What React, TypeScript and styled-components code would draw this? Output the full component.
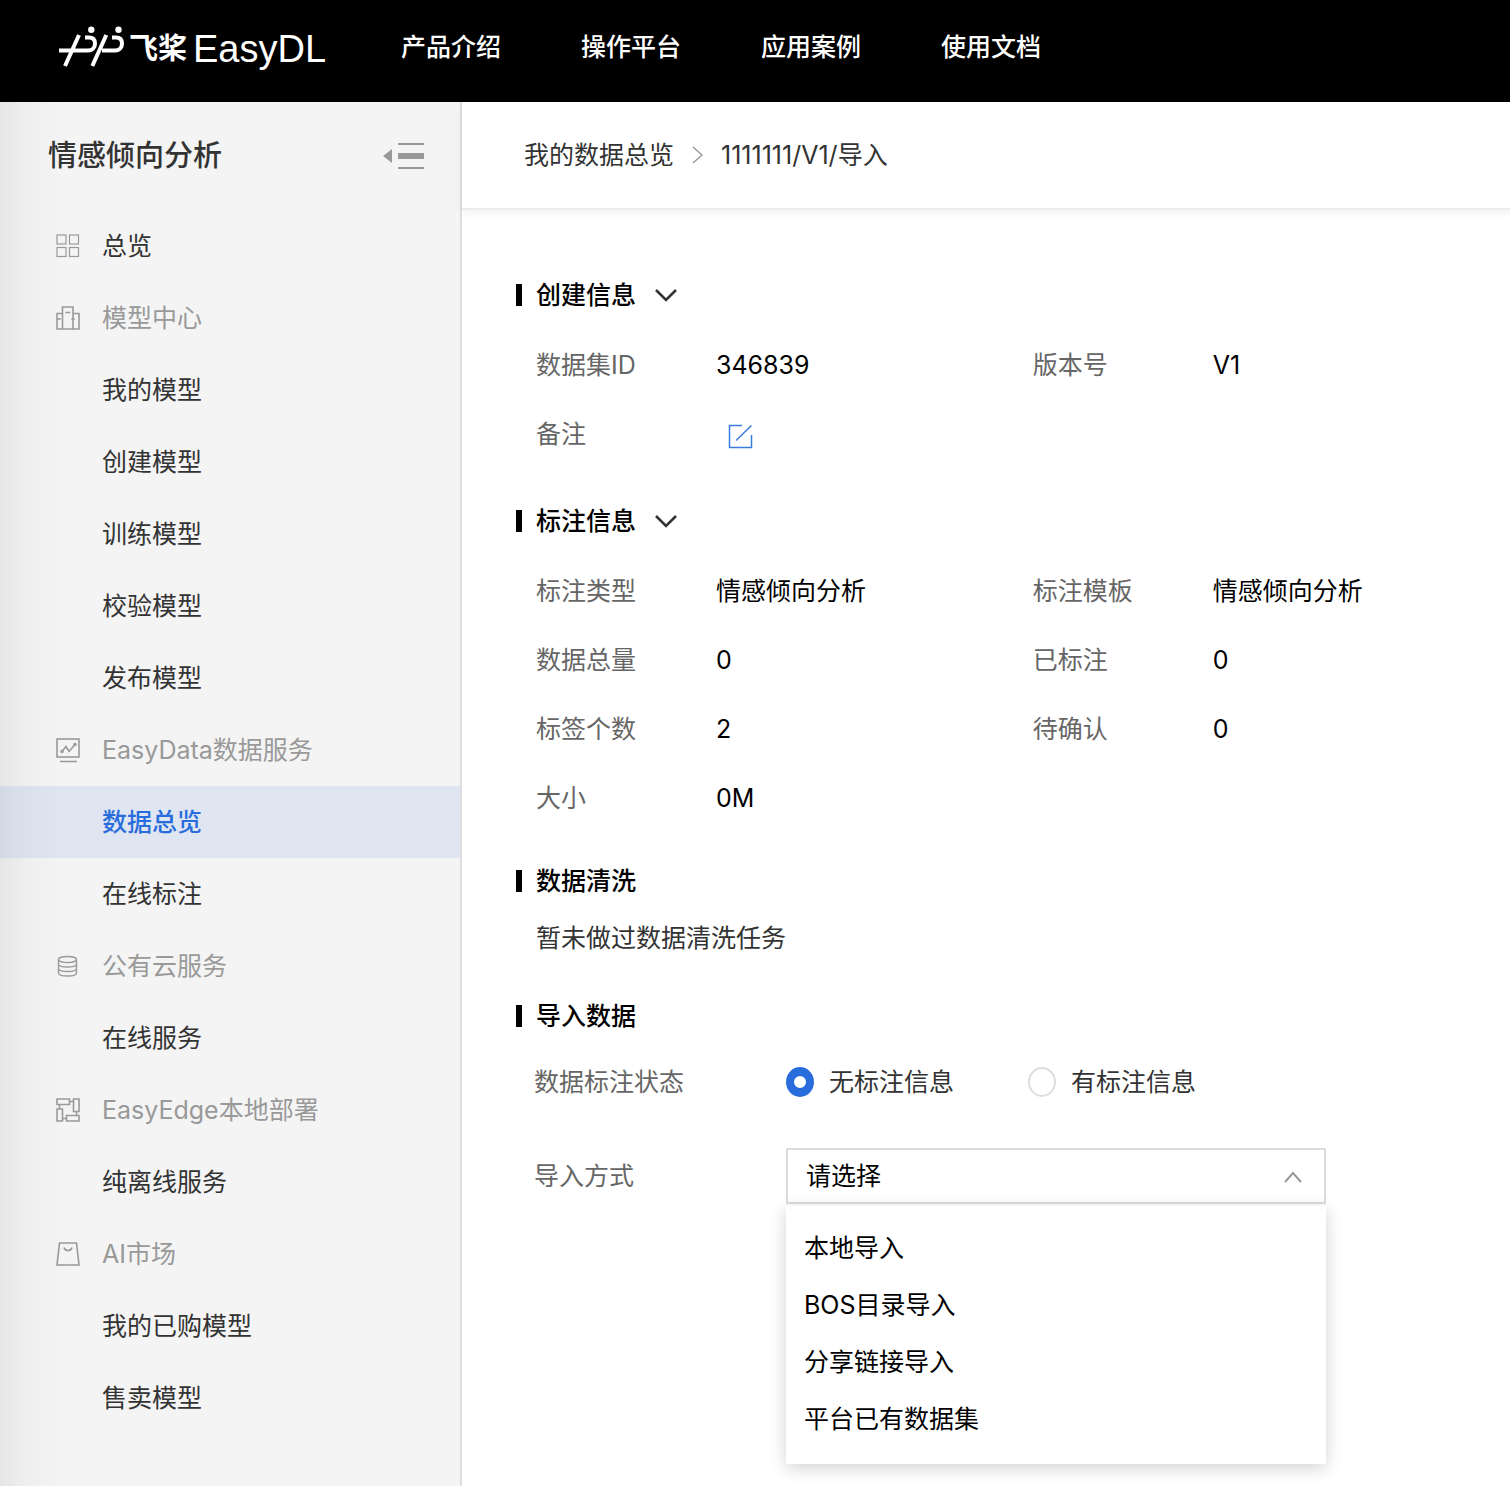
import React, { useState } from "react";
import styled, { createGlobalStyle } from "styled-components";

const GlobalStyle = createGlobalStyle`
  *, *::before, *::after { box-sizing: border-box; }
  body {
    margin: 0;
    background: #fff;
    color: #333;
    font-family: Inter, "Noto Sans CJK SC", sans-serif;
    font-size: 25px;
    font-weight: 400;
    line-height: 36px;
  }
  h1, h2, ul, dl, dd, p { margin: 0; padding: 0; }
  ul { list-style: none; }
  a { color: inherit; text-decoration: none; }
  button, select, input { font: inherit; color: inherit; margin: 0; }
`;

const Page = styled.div`
  display: flex;
  flex-direction: column;
  min-height: 100vh;
`;

const Header = styled.header`
  display: flex;
  align-items: center;
  height: 102px;
  padding: 0 58px 8px;
  background: #000;
  color: #fff;
`;

const Brand = styled.a`
  display: flex;
  align-items: center;
  width: 343px;
  flex: none;
  white-space: nowrap;
`;

const BrandMark = styled.svg`
  width: 68px;
  height: 42px;
  flex: none;
`;

const BrandName = styled.span`
  display: flex;
  align-items: center;
  gap: 6px;
  margin-left: 3px;
  padding-top: 4px;
`;

const BrandChinese = styled.span`
  font-size: 29px;
  font-weight: 700;
`;

const BrandLatin = styled.span`
  font-family: "Liberation Sans", sans-serif;
  font-size: 38px;
`;

const TopNav = styled.nav`
  display: flex;
  gap: 80px;
  font-weight: 500;
  white-space: nowrap;
`;

const Body = styled.div`
  display: flex;
  flex: 1;
`;

const Sidebar = styled.aside`
  width: 462px;
  flex: none;
  border-right: 2px solid #dedede;
  background: linear-gradient(to right, #e6e6e6, #efefef 28px, #f4f4f4 64px);
`;

const SidebarHead = styled.div`
  display: flex;
  align-items: center;
  justify-content: space-between;
  height: 108px;
  padding: 0 36px 0 48px;
`;

const SidebarTitle = styled.h1`
  font-size: 29px;
  font-weight: 500;
`;

const IconButton = styled.button`
  display: flex;
  padding: 0;
  border: 0;
  background: none;
  cursor: pointer;
`;

const MenuGroup = styled.div`
  display: flex;
  align-items: center;
  height: 72px;
  padding-left: 54px;
  color: #999;
`;

const MenuIcon = styled.svg`
  width: 28px;
  height: 28px;
  margin-right: 20px;
  fill: none;
  stroke: #999;
  stroke-width: 2;
`;

const MenuLink = styled.a<{ $active?: boolean; $icon?: boolean }>`
  display: flex;
  align-items: center;
  height: 72px;
  padding-left: ${(p) => (p.$icon ? 54 : 102)}px;
  color: ${(p) => (p.$active ? "#296ddd" : "#333")};
  font-weight: ${(p) => (p.$active ? 500 : 400)};
  background: ${(p) => (p.$active ? "rgba(41, 109, 218, 0.1)" : "none")};
`;

const Main = styled.main`
  flex: 1;
  min-width: 0;
`;

const Breadcrumb = styled.nav`
  display: flex;
  align-items: center;
  height: 108px;
  padding-left: 62px;
  border-bottom: 2px solid #ebebeb;
  box-shadow: 0 4px 8px rgba(0, 0, 0, 0.05);
`;

const Separator = styled.svg`
  width: 11px;
  height: 18px;
  margin: 0 18px;
`;

const Content = styled.div`
  padding: 49px 0 0 54px;
`;

const Section = styled.section<{ $gap: number }>`
  margin-bottom: ${(p) => p.$gap}px;
`;

const SectionHead = styled.div`
  display: flex;
  align-items: center;
  height: 71px;
  &::before {
    content: "";
    width: 6px;
    height: 22px;
    margin-right: 14px;
    background: #000;
  }
`;

const SectionTitle = styled.h2`
  margin-right: 19px;
  color: #000;
  font-size: 25px;
  font-weight: 500;
`;

const Facts = styled.dl`
  display: grid;
  grid-template-columns: 51fr 49fr;
  padding-left: 20px;
`;

const Fact = styled.div`
  display: flex;
  align-items: center;
  height: 69px;
`;

const FactName = styled.dt`
  width: 180px;
  flex: none;
  color: #666;
`;

const FactValue = styled.dd`
  display: flex;
  color: #000;
`;

const EditButton = styled(IconButton)`
  margin: 6px 0 0 12px;
`;

const Note = styled.p`
  height: 45px;
  padding-left: 20px;
  line-height: 45px;
`;

const FormRow = styled.div`
  display: flex;
  align-items: center;
  height: 62px;
  margin-bottom: 32px;
  padding-left: 18px;
`;

const FormLabel = styled.label`
  width: 252px;
  flex: none;
  color: #666;
`;

const RadioGroup = styled.div`
  display: flex;
  gap: 74px;
`;

const RadioLabel = styled.label`
  display: flex;
  align-items: center;
  gap: 15px;
`;

const Radio = styled.input`
  appearance: none;
  width: 28px;
  height: 30px;
  border: 2px solid #ddd;
  border-radius: 50%;
  background: #fff;
  &:checked {
    border-color: #296ddd;
    border-width: 9px 8px;
  }
`;

const Picker = styled.div`
  position: relative;
  width: 540px;
`;

const Select = styled.select`
  display: block;
  appearance: none;
  width: 100%;
  height: 56px;
  padding: 0 18px;
  border: 2px solid #dcdcdc;
  border-radius: 0;
  background: #fff;
  color: #000;
  outline: none;
`;

const Caret = styled.svg`
  position: absolute;
  right: 24px;
  top: 22px;
  width: 18px;
  height: 14px;
  pointer-events: none;
`;

const Options = styled.ul`
  position: absolute;
  top: 58px;
  left: 0;
  right: 0;
  padding: 14px 0 16px;
  background: #fff;
  box-shadow: 0 4px 16px rgba(0, 0, 0, 0.18);
`;

const Option = styled.button`
  display: block;
  width: 100%;
  padding: 0 18px;
  border: 0;
  background: none;
  color: #000;
  line-height: 57px;
  text-align: left;
  cursor: pointer;
`;

const icons: Record<string, React.ReactNode> = {
  grid: (
    <g strokeWidth="1.2">
      <rect x="3" y="3" width="9" height="9" />
      <rect x="15.5" y="3" width="9" height="9" />
      <rect x="3" y="15.5" width="9" height="9" />
      <rect x="15.5" y="15.5" width="9" height="9" />
    </g>
  ),
  building: (
    <g strokeWidth="1.6">
      <path d="M8.5 25V3h10.500v22M8.500 9.500H3V25h22V9.500h-6" />
      <path d="M13 8.500h5M5 15h3.500M19 15h3.500" transform="translate(-1.700 0)" />
    </g>
  ),
  monitor: (
    <g strokeWidth="1.6">
      <rect x="3" y="3" width="22" height="18" />
      <path d="M6 25.5h17M8 15.500l4-5 3 5 6-7" />
      <circle cx="8" cy="15.5" r="1" />
      <circle cx="21" cy="8.5" r="1" />
    </g>
  ),
  database: (
    <g strokeWidth="1.4">
      <ellipse cx="13.5" cy="7.5" rx="9" ry="3" />
      <path d="M4.500 7.500v13.500c0 4 18 4 18 0V7.500M4.500 12c0 4 18 4 18 0M4.500 16.500c0 4 18 4 18 0" />
    </g>
  ),
  edge: (
    <g strokeWidth="1.6">
      <path d="M3 3h12.500v5.500H3zM19.500 3H25v12.500h-5.500zM3 13h5.500v12H3zM12.500 19.500H25V25H12.500z" />
      <path d="M15.500 5.500h4M22.500 15.500v4M5.500 8.500V13M8.500 22.500h4" />
    </g>
  ),
  bag: (
    <g strokeWidth="1.6">
      <path d="M5.500 3h17L25 25H3z" />
      <path d="M10 7.500c1 4 7 4 8 0" />
    </g>
  ),
};

const menu: { icon?: string; label: string; group?: boolean }[] = [
  { icon: "grid", label: "总览" },
  { icon: "building", label: "模型中心", group: true },
  { label: "我的模型" },
  { label: "创建模型" },
  { label: "训练模型" },
  { label: "校验模型" },
  { label: "发布模型" },
  { icon: "monitor", label: "EasyData数据服务", group: true },
  { label: "数据总览" },
  { label: "在线标注" },
  { icon: "database", label: "公有云服务", group: true },
  { label: "在线服务" },
  { icon: "edge", label: "EasyEdge本地部署", group: true },
  { label: "纯离线服务" },
  { icon: "bag", label: "AI市场", group: true },
  { label: "我的已购模型" },
  { label: "售卖模型" },
];

const importMethods = ["本地导入", "BOS目录导入", "分享链接导入", "平台已有数据集"];

const Toggle = () => (
  <IconButton type="button" aria-label="收起">
    <svg width="22" height="14" viewBox="0 0 22 14" fill="none" stroke="#333" strokeWidth="2.6">
      <path d="M1 2l10 10 10-10" />
    </svg>
  </IconButton>
);

export default function App() {
  const [status, setStatus] = useState("none");
  const [method, setMethod] = useState("");

  return (
    <Page>
      <GlobalStyle />
      <Header>
        <Brand href="#">
          <BrandMark viewBox="0 0 68 42" fill="none" stroke="#fff" strokeWidth="4">
            <path d="M21 9L7 40M1 24.500H30C35 24.500 37 21 37 17.500C37 13.500 35 11.500 31 11.500H27" />
            <path d="M48.300 9L34.300 40M44 24.500H57C62 24.500 64 21 64 17.500C64 13.500 62 11.500 58 11.500H54" />
            <circle cx="33.3" cy="3.8" r="3.2" fill="#fff" stroke="none" />
            <circle cx="60.5" cy="3.8" r="3.2" fill="#fff" stroke="none" />
          </BrandMark>
          <BrandName>
            <BrandChinese>飞桨</BrandChinese>
            <BrandLatin>EasyDL</BrandLatin>
          </BrandName>
        </Brand>
        <TopNav>
          <a href="#">产品介绍</a>
          <a href="#">操作平台</a>
          <a href="#">应用案例</a>
          <a href="#">使用文档</a>
        </TopNav>
      </Header>
      <Body>
        <Sidebar>
          <SidebarHead>
            <SidebarTitle>情感倾向分析</SidebarTitle>
            <IconButton type="button" aria-label="收起菜单">
              <svg width="41" height="28" viewBox="0 0 41 28" fill="#999">
                <path d="M0 14l9-7v14zM15 1h26v2H15zM15 11h26v6H15zM15 25h26v2H15z" />
              </svg>
            </IconButton>
          </SidebarHead>
          <ul>
            {menu.map((m) => (
              <li key={m.label}>
                {m.group ? (
                  <MenuGroup>
                    <MenuIcon viewBox="0 0 28 28">{icons[m.icon!]}</MenuIcon>
                    {m.label}
                  </MenuGroup>
                ) : (
                  <MenuLink href="#" $icon={!!m.icon} $active={m.label === "数据总览"}>
                    {m.icon && <MenuIcon viewBox="0 0 28 28">{icons[m.icon]}</MenuIcon>}
                    {m.label}
                  </MenuLink>
                )}
              </li>
            ))}
          </ul>
        </Sidebar>
        <Main>
          <Breadcrumb>
            <a href="#">我的数据总览</a>
            <Separator viewBox="0 0 11 18" fill="none" stroke="#999" strokeWidth="1.5">
              <path d="M1 1l9 8-9 8" />
            </Separator>
            <span>1111111/V1/导入</span>
          </Breadcrumb>
          <Content>
            <Section $gap={17}>
              <SectionHead>
                <SectionTitle>创建信息</SectionTitle>
                <Toggle />
              </SectionHead>
              <Facts>
                <Fact><FactName>数据集ID</FactName><FactValue>346839</FactValue></Fact>
                <Fact><FactName>版本号</FactName><FactValue>V1</FactValue></Fact>
                <Fact>
                  <FactName>备注</FactName>
                  <FactValue>
                    <EditButton type="button" aria-label="编辑备注">
                      <svg width="25" height="25" viewBox="0 0 25 25" fill="none" stroke="#3a7be0" strokeWidth="1.5">
                        <path d="M14 1.500H1.500v22h22V11M8 16.500L23.500 1.500" />
                      </svg>
                    </EditButton>
                  </FactValue>
                </Fact>
              </Facts>
            </Section>
            <Section $gap={13}>
              <SectionHead>
                <SectionTitle>标注信息</SectionTitle>
                <Toggle />
              </SectionHead>
              <Facts>
                <Fact><FactName>标注类型</FactName><FactValue>情感倾向分析</FactValue></Fact>
                <Fact><FactName>标注模板</FactName><FactValue>情感倾向分析</FactValue></Fact>
                <Fact><FactName>数据总量</FactName><FactValue>0</FactValue></Fact>
                <Fact><FactName>已标注</FactName><FactValue>0</FactValue></Fact>
                <Fact><FactName>标签个数</FactName><FactValue>2</FactValue></Fact>
                <Fact><FactName>待确认</FactName><FactValue>0</FactValue></Fact>
                <Fact><FactName>大小</FactName><FactValue>0M</FactValue></Fact>
              </Facts>
            </Section>
            <Section $gap={19}>
              <SectionHead><SectionTitle>数据清洗</SectionTitle></SectionHead>
              <Note>暂未做过数据清洗任务</Note>
            </Section>
            <Section $gap={0}>
              <SectionHead><SectionTitle>导入数据</SectionTitle></SectionHead>
              <FormRow>
                <FormLabel as="span" id="status-label">数据标注状态</FormLabel>
                <RadioGroup role="radiogroup" aria-labelledby="status-label">
                  <RadioLabel>
                    <Radio type="radio" name="status" checked={status === "none"} onChange={() => setStatus("none")} />
                    无标注信息
                  </RadioLabel>
                  <RadioLabel>
                    <Radio type="radio" name="status" checked={status === "labelled"} onChange={() => setStatus("labelled")} />
                    有标注信息
                  </RadioLabel>
                </RadioGroup>
              </FormRow>
              <FormRow>
                <FormLabel htmlFor="method">导入方式</FormLabel>
                <Picker>
                  <Select id="method" value={method} onChange={(e) => setMethod(e.target.value)}>
                    <option value="">请选择</option>
                    {importMethods.map((m) => <option key={m} value={m}>{m}</option>)}
                  </Select>
                  <Caret viewBox="0 0 18 14" fill="none" stroke="#999" strokeWidth="2">
                    <path d="M1 12l8-9 8 9" />
                  </Caret>
                  <Options>
                    {importMethods.map((m) => (
                      <li key={m}><Option type="button" onClick={() => setMethod(m)}>{m}</Option></li>
                    ))}
                  </Options>
                </Picker>
              </FormRow>
            </Section>
          </Content>
        </Main>
      </Body>
    </Page>
  );
}
